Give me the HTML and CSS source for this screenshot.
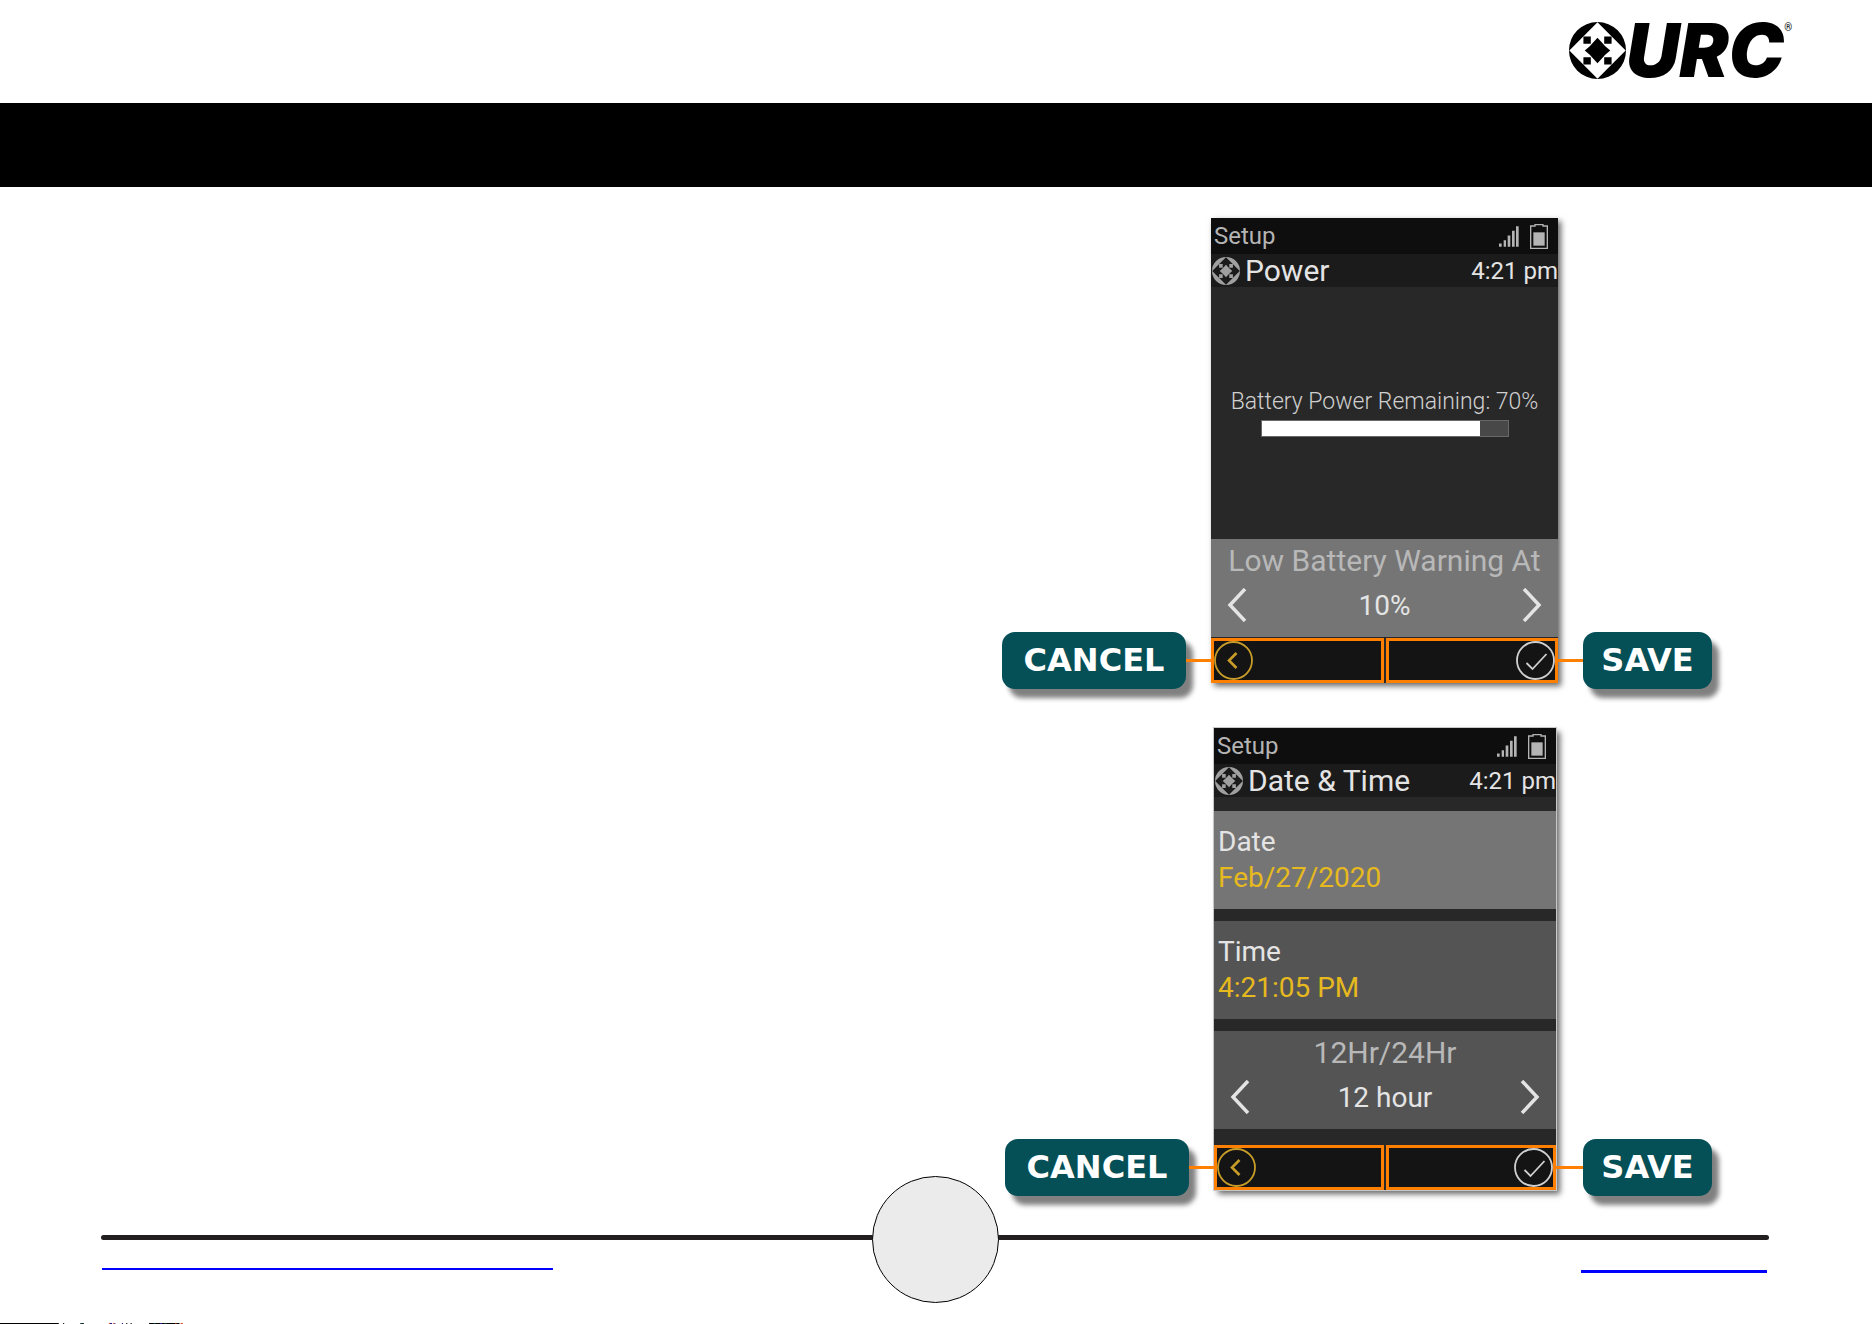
FILE: index.html
```
<!DOCTYPE html>
<html lang="en">
<head>
  <meta charset="UTF-8">
  <title>URC Setup</title>
  <link rel="stylesheet" href="styles.css">
</head>
<body>
  <svg class="symbols" aria-hidden="true">
    <symbol id="emblem" viewBox="0 0 170 170">
      <path fill-rule="evenodd" d="M85 0a85 85 0 0 1 0 170a85 85 0 0 1 0-170zM85 1L169 85L85 169L1 85z"/>
      <path d="M43 43h22v22h-22zM105 43h22v22h-22zM43 105h22v22h-22zM105 105h22v22h-22z"/>
      <path d="M85 47l11 12 12 13 15 13-15 13-12 13-11 12-11-12-12-13-15-13 15-13 12-13z"/>
    </symbol>
    <symbol id="signal" viewBox="0 0 60 62">
      <path d="M0 52h8v10H0zM14 42h7v20h-7zM26 28h8v34h-8zM39 14h8v48h-8zM51 0h8v62h-8z"/>
    </symbol>
    <symbol id="battery" viewBox="0 0 54 75">
      <path d="M2 6h13V2h24v4h13v67H2z" fill="none" stroke="currentColor" stroke-width="4"/>
      <path d="M10 25h34v40H10z"/>
    </symbol>
    <symbol id="chevron-left" viewBox="0 0 20 34">
      <path d="M18 1L3 17l15 16" fill="none" stroke="currentColor" stroke-width="3.5"/>
    </symbol>
    <symbol id="chevron-right" viewBox="0 0 20 34">
      <path d="M2 1l15 16L2 33" fill="none" stroke="currentColor" stroke-width="3.5"/>
    </symbol>
    <symbol id="back" viewBox="0 0 39 39">
      <g fill="none" stroke="currentColor">
        <circle cx="19.5" cy="19.5" r="18.5" stroke-width="1.8"/>
        <path d="M22.5 12l-7.5 7.5 7.5 7.5" stroke-width="2.6"/>
      </g>
    </symbol>
    <symbol id="check" viewBox="0 0 39 39">
      <g fill="none" stroke="currentColor" stroke-width="1.8">
        <circle cx="19.5" cy="19.5" r="18.5"/>
        <path d="M10.5 22l6 6L30.5 13"/>
      </g>
    </symbol>
  </svg>

  <header class="header">
    <div class="logo">
      <svg class="logo-emblem"><use href="#emblem"/></svg>
      <span class="logo-name">URC</span>
      <sup class="logo-mark">®</sup>
    </div>
  </header>
  <div class="band"></div>

  <main class="screens">
    <section class="screen-row">
      <div class="callout">
        <span class="callout-label cancel">CANCEL</span>
        <span class="connector"></span>
      </div>

      <div class="phone">
        <div class="status-bar">
          <span>Setup</span>
          <svg class="signal"><use href="#signal"/></svg>
          <svg class="battery"><use href="#battery"/></svg>
        </div>
        <div class="title-bar">
          <svg class="emblem"><use href="#emblem"/></svg>
          <h2>Power</h2>
          <time>4:21 pm</time>
        </div>
        <div class="power">
          <span id="powerLabel">Battery Power Remaining: 70%</span>
          <div class="meter" role="progressbar" aria-labelledby="powerLabel" aria-valuenow="70">
            <div class="meter-fill" style="width: 89%"></div>
          </div>
        </div>
        <div class="picker active">
          <div class="picker-label">Low Battery Warning At</div>
          <div class="picker-row">
            <button aria-label="Lower"><svg class="chevron"><use href="#chevron-left"/></svg></button>
            <span>10%</span>
            <button aria-label="Higher"><svg class="chevron"><use href="#chevron-right"/></svg></button>
          </div>
        </div>
        <div class="soft-keys">
          <button class="soft-key" aria-label="Cancel"><svg><use href="#back"/></svg></button>
          <button class="soft-key save" aria-label="Save"><svg><use href="#check"/></svg></button>
        </div>
      </div>

      <div class="callout">
        <span class="connector"></span>
        <span class="callout-label">SAVE</span>
      </div>
    </section>

    <section class="screen-row">
      <div class="callout">
        <span class="callout-label cancel">CANCEL</span>
        <span class="connector"></span>
      </div>

      <div class="phone date-time">
        <div class="status-bar">
          <span>Setup</span>
          <svg class="signal"><use href="#signal"/></svg>
          <svg class="battery"><use href="#battery"/></svg>
        </div>
        <div class="title-bar">
          <svg class="emblem"><use href="#emblem"/></svg>
          <h2>Date &amp; Time</h2>
          <time>4:21 pm</time>
        </div>
        <div class="tiles">
          <button class="tile active">Date<span class="tile-value">Feb/27/2020</span></button>
          <button class="tile">Time<span class="tile-value">4:21:05 PM</span></button>
          <div class="picker">
            <div class="picker-label">12Hr/24Hr</div>
            <div class="picker-row">
              <button aria-label="Previous"><svg class="chevron"><use href="#chevron-left"/></svg></button>
              <span>12 hour</span>
              <button aria-label="Next"><svg class="chevron"><use href="#chevron-right"/></svg></button>
            </div>
          </div>
        </div>
        <div class="soft-keys">
          <button class="soft-key" aria-label="Cancel"><svg><use href="#back"/></svg></button>
          <button class="soft-key save" aria-label="Save"><svg><use href="#check"/></svg></button>
        </div>
      </div>

      <div class="callout">
        <span class="connector wide"></span>
        <span class="callout-label">SAVE</span>
      </div>
    </section>
  </main>

  <footer class="footer">
    <div class="rule"></div>
    <div class="page-circle"></div>
    <div class="footer-links">
      <a class="link-left" href="#" aria-label="Support"></a>
      <a class="link-right" href="#" aria-label="Website"></a>
    </div>
  </footer>

  <svg class="edge" viewBox="0 0 170 1" preserveAspectRatio="none" aria-hidden="true">
    <path d="M0 0h54v1H0zM58 0h1v1h-1zM74 0h3v1h-3zM116 0h1v1h-1zM120 0h1v1h-1zM137 0h28v1h-28z"/>
    <path fill="#143c3c" d="M74 0h2v1h-2zM141 0h2v1h-2zM151 0h2v1h-2z"/>
    <path fill="#2a1a9a" d="M101 0h2v1h-2zM105 0h1v1h-1zM112 0h1v1h-1zM147 0h2v1h-2z"/>
    <path fill="#e04a20" d="M100 0h1v1h-1zM104 0h1v1h-1zM161 0h1v1h-1zM166 0h2v1h-2z"/>
  </svg>
</body>
</html>
```
FILE: styles.css
```
:root {
  --teal: #054f57;
  --orange: #ff8000;
  --gold: #e6b91e;
  --screen: #282828;
  --tile: #545454;
  --tile-active: #757575;
  --link: #0000ff;
}

* {
  box-sizing: border-box;
}

body {
  display: flex;
  flex-direction: column;
  min-height: 100vh;
  margin: 0;
  background: #fff;
  font-family: Roboto, "Liberation Sans", sans-serif;
}

svg {
  display: block;
  fill: currentColor;
}

button {
  padding: 0;
  border: none;
  background: none;
  color: inherit;
  font: inherit;
  cursor: pointer;
}

.symbols {
  position: absolute;
  width: 0;
  height: 0;
}

/* header */

.header {
  display: flex;
  justify-content: flex-end;
  height: 103px;
  padding: 22px 80px 0 0;
}

.logo {
  display: flex;
  height: 57px;
}

.logo-emblem {
  width: 57px;
  height: 57px;
}

.logo-name {
  font-family: Inter, "Liberation Sans", sans-serif;
  font-size: 74px;
  font-style: italic;
  font-weight: 900;
  line-height: 57px;
}

.logo-mark {
  font-size: 10px;
  line-height: 12px;
}

.band {
  height: 84px;
  background: #000;
}

/* screens */

.screens {
  display: flex;
  flex-direction: column;
  gap: 45px;
  padding: 31px 160px 0 0;
}

.screen-row {
  display: flex;
  justify-content: flex-end;
  align-items: flex-end;
}

.callout {
  display: flex;
  align-items: center;
  margin-bottom: -6px;
}

.callout-label {
  width: 129px;
  border-radius: 13px;
  background: var(--teal);
  box-shadow: 7px 9px 5px #808080;
  color: #fff;
  font-family: "DejaVu Sans", sans-serif;
  font-size: 32px;
  font-weight: bold;
  line-height: 57px;
  text-align: center;
}

.callout-label.cancel {
  width: 184px;
}

.connector {
  position: relative;
  width: 25px;
  height: 3px;
  background: var(--orange);
}

.connector.wide {
  width: 27px;
}

.phone {
  width: 347px;
  background: var(--screen);
  box-shadow: 3px 3px 6px rgba(0, 0, 0, 0.6);
  color: #e4e4e4;
  font-size: 28px;
}

.phone.date-time {
  width: 342px;
  box-shadow: 0 0 0 1px #c8c8c8, 4px 4px 6px rgba(0, 0, 0, 0.6);
}

.status-bar {
  display: flex;
  align-items: center;
  height: 36px;
  padding: 0 10px 0 3px;
  background: #0e0e0e;
  color: #b4b4b4;
  font-size: 24px;
}

.signal {
  width: 20px;
  height: 21px;
  margin-left: auto;
}

.battery {
  width: 18px;
  height: 25px;
  margin-left: 11px;
}

.title-bar {
  display: flex;
  align-items: center;
  height: 33px;
  padding-left: 1px;
  background: #1b1b1b;
}

.emblem {
  width: 28px;
  height: 28px;
  color: #a0a0a0;
}

.title-bar h2 {
  margin: 0 0 0 5px;
  font-size: 30px;
  font-weight: 400;
  line-height: 32px;
}

.title-bar time {
  margin-left: auto;
  font-size: 24px;
}

.power {
  display: flex;
  flex-direction: column;
  align-items: center;
  justify-content: center;
  gap: 4px;
  min-height: 252px;
  padding-bottom: 2px;
  color: #d0d0d0;
  font-size: 23px;
  font-weight: 300;
  line-height: 28px;
}

.meter {
  width: 248px;
  height: 17px;
  border: 1px solid #686868;
  background: #484848;
}

.meter-fill {
  height: 100%;
  background: #fff;
}

.picker {
  padding-bottom: 10px;
  background: var(--tile);
  text-align: center;
}

.picker-label {
  color: #b8b8b8;
  font-size: 30px;
  line-height: 44px;
}

.picker-row {
  display: flex;
  align-items: center;
  justify-content: space-between;
  height: 44px;
  padding: 0 16px;
}

.chevron {
  width: 20px;
  height: 34px;
}

.tiles {
  display: flex;
  flex-direction: column;
  gap: 12px;
  padding: 14px 0 15px;
}

.tile {
  display: flex;
  flex-direction: column;
  padding: 13px 4px;
  background: var(--tile);
  line-height: 36px;
  text-align: left;
}

.tile-value {
  color: var(--gold);
}

.active {
  background: var(--tile-active);
}

.soft-keys {
  display: flex;
  gap: 2px;
  padding-top: 1px;
}

.soft-key {
  display: flex;
  flex: 1;
  border: 3px solid var(--orange);
  background: #141414;
  color: #c79c28;
}

.soft-key svg {
  width: 39px;
  height: 39px;
}

.soft-key.save {
  justify-content: flex-end;
  color: #d0d0d0;
}

/* footer */

.footer {
  position: relative;
  margin: 45px 103px 0 101px;
}

.rule {
  height: 5px;
  border-radius: 3px;
  background: #231f20;
}

.page-circle {
  position: absolute;
  top: -59px;
  left: 50%;
  width: 127px;
  height: 127px;
  margin-left: -63px;
  border: 1px solid #000;
  border-radius: 50%;
  background: #ebebeb;
}

.footer-links {
  display: flex;
  align-items: flex-start;
  justify-content: space-between;
  padding: 0 2px 0 1px;
}

.link-left {
  width: 451px;
  height: 30px;
  border-bottom: 2px solid var(--link);
}

.link-right {
  width: 186px;
  height: 33px;
  border-bottom: 3px solid var(--link);
}

.edge {
  width: 185px;
  height: 1px;
  margin-top: auto;
}
```
